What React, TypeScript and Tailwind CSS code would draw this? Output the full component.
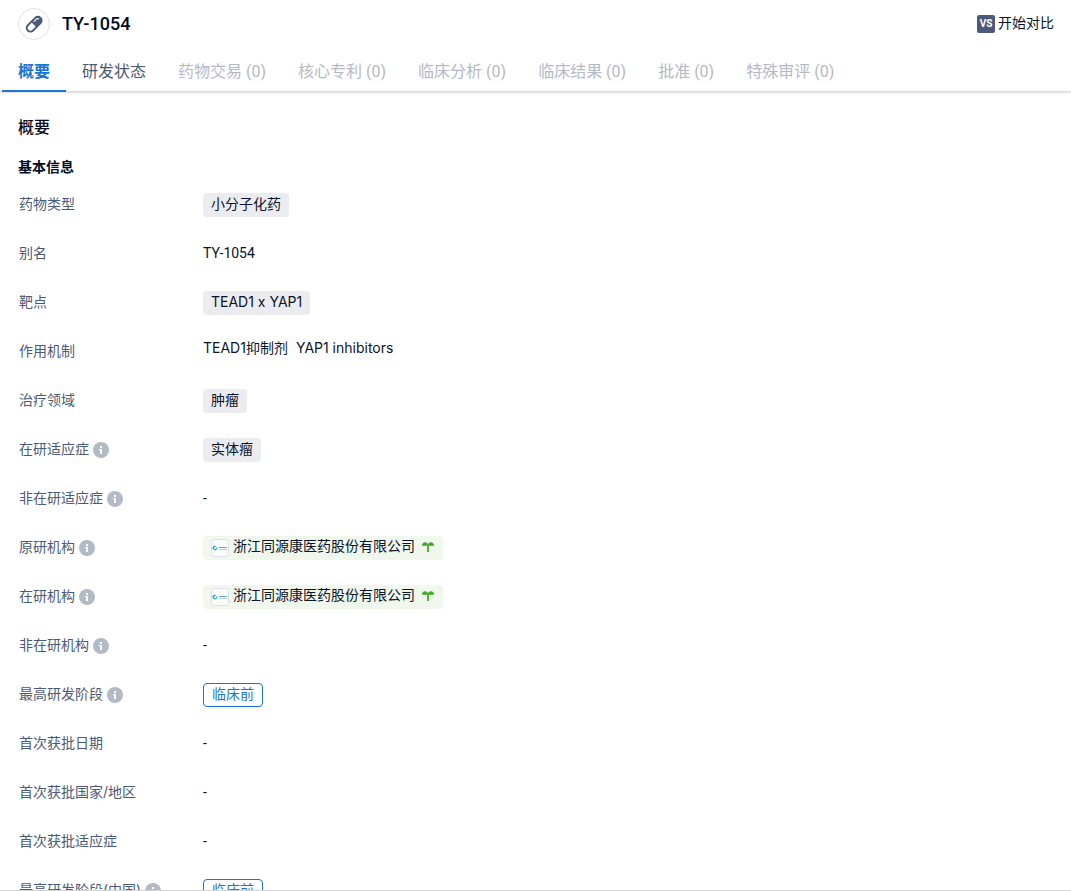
import React, { useState } from 'react';

const tabs = [
  { name: '概要' },
  { name: '研发状态' },
  { name: '药物交易', count: 0 },
  { name: '核心专利', count: 0 },
  { name: '临床分析', count: 0 },
  { name: '临床结果', count: 0 },
  { name: '批准', count: 0 },
  { name: '特殊审评', count: 0 },
];

const PillIcon = () => (
  <svg width="20" height="20" viewBox="0 0 20 20" aria-hidden="true">
    <g transform="rotate(-45 10 10)">
      <rect x="1" y="6.5" width="18" height="7.5" rx="3.75" fill="none" stroke="#4a5a78" strokeWidth="1.9" />
      <path d="M9.500 6.500H15a3.750 3.750 0 0 1 0 7.500H9.500z" fill="#4a5a78" />
      <path d="M12 8.200h3a2 2 0 0 1 1.800 1.300" fill="none" stroke="#fff" strokeWidth="1.100" strokeLinecap="round" />
    </g>
  </svg>
);

const InfoIcon = () => (
  <svg className="mt-1 shrink-0" width="16" height="16" viewBox="0 0 16 16" aria-hidden="true">
    <circle cx="8" cy="8" r="8" fill="#b4b9c6" />
    <path d="M7 4h2v2H7zM6 7h3v5H7V8.200H6z" fill="#fff" />
  </svg>
);

const SproutIcon = () => (
  <svg className="mb-0.5" width="14" height="12" viewBox="0 0 14 12" aria-hidden="true">
    <path d="M.8 5C.8 2.200 2.600 1 4.300 1.200 5.700 1.300 6.600 2.200 7 3.200 7.400 2.200 8.300 1.300 9.700 1.200 11.400 1 13.200 2.200 13.200 5 11.600 4.300 10.300 5.200 9 4.900 8.500 4.800 8 4.600 7.900 4.600V11H6.100V4.600C6 4.600 5.500 4.800 5 4.900 3.700 5.200 2.400 4.300.8 5z" fill="#42ad2d" />
  </svg>
);

const CompanyLogo = () => (
  <svg width="18" height="18" viewBox="0 0 18 18" aria-hidden="true">
    <rect x=".5" y=".5" width="17" height="17" rx="3" fill="#fafcfb" stroke="#dcdfe8" />
    <path d="M4.500 7.500A1.700 1.700 0 0 0 2.500 10" fill="none" stroke="#2584dc" strokeWidth="1.400" />
    <path d="M2.700 10.200A1.800 1.800 0 0 0 5.700 8.500" fill="none" stroke="#22b7a0" strokeWidth="1.400" />
    <path d="M8 8.500h6" stroke="#5f9fe0" />
    <path d="M14 8.500h2" stroke="#6cc89a" />
    <path d="M8 10.500h8" stroke="#c3c7ce" />
  </svg>
);

const Tag = ({ children }: { children: React.ReactNode }) => (
  <span className="flex h-6 items-center rounded bg-[#ebecf0] px-2 pb-0.5">{children}</span>
);

const Company = ({ name }: { name: string }) => (
  <a href="#company" className="flex h-6 items-center rounded bg-[#f0f8ee] px-2">
    <CompanyLogo />
    <span className="mr-1.5 ml-1 pb-1">{name}</span>
    <SproutIcon />
  </a>
);

const Phase = ({ name }: { name: string }) => (
  <a href="#phase" className="flex h-6 items-center rounded border border-[#1976d2] px-2 pb-0.5 text-[#1976d2]">
    {name}
  </a>
);

const rows: { label: string; info?: boolean; value?: React.ReactNode }[] = [
  { label: '药物类型', value: <Tag>小分子化药</Tag> },
  { label: '别名', value: <span className="font-[Roboto,sans-serif]">TY-1054</span> },
  { label: '靶点', value: <Tag>TEAD1 x YAP1</Tag> },
  {
    label: '作用机制',
    value: (
      <div className="flex gap-2 leading-4">
        <span>TEAD1抑制剂</span>
        <span>YAP1 inhibitors</span>
      </div>
    ),
  },
  { label: '治疗领域', value: <Tag>肿瘤</Tag> },
  { label: '在研适应症', info: true, value: <Tag>实体瘤</Tag> },
  { label: '非在研适应症', info: true },
  { label: '原研机构', info: true, value: <Company name="浙江同源康医药股份有限公司" /> },
  { label: '在研机构', info: true, value: <Company name="浙江同源康医药股份有限公司" /> },
  { label: '非在研机构', info: true },
  { label: '最高研发阶段', info: true, value: <Phase name="临床前" /> },
  { label: '首次获批日期' },
  { label: '首次获批国家/地区' },
  { label: '首次获批适应症' },
  { label: '最高研发阶段(中国)', info: true, value: <Phase name="临床前" /> },
];

const App = () => {
  const [active, setActive] = useState('概要');

  return (
    <div className="flex h-screen flex-col overflow-hidden border-b border-[#d4d4d4] bg-white font-[Roboto,'Noto_Sans_CJK_SC',sans-serif] text-[#0b1328]">
      <header className="shrink-0 border-b border-[#dcdcdc] shadow-sm">
        <div className="flex h-12 items-center justify-between pr-[17px] pl-[18px]">
          <div className="flex items-center gap-3">
            <span className="flex size-8 items-center justify-center rounded-full border border-[#dfe1e8]">
              <PillIcon />
            </span>
            <h1 className="text-lg font-medium text-[#030a1c]">TY-1054</h1>
          </div>
          <button type="button" className="flex items-center gap-[3px] text-sm">
            <span className="flex size-[18px] items-center justify-center rounded-xs bg-[#4a5a78] text-[10px] font-bold text-white">VS</span>
            <span className="pb-0.5">开始对比</span>
          </button>
        </div>

        {/* Tabs */}
        <nav className="-mb-px flex pl-0.5">
          {tabs.map((tab) => (
            <button
              key={tab.name}
              type="button"
              disabled={tab.count === 0}
              onClick={() => setActive(tab.name)}
              className={`h-11 border-b-2 px-4 pt-1.5 text-base whitespace-nowrap ${
                active === tab.name
                  ? 'border-[#1976d2] font-bold text-[#1976d2]'
                  : tab.count === 0
                    ? 'border-transparent text-[#b4b9c6]'
                    : 'border-transparent text-[#4a5a78]'
              }`}
            >
              {tab.name}
              {tab.count !== undefined && ` (${tab.count})`}
            </button>
          ))}
        </nav>
      </header>

      <main className="min-h-0 flex-1 overflow-hidden px-[18px] pt-6">
        <h2 className="text-base leading-6 font-medium text-[#030a1c]">概要</h2>
        <h3 className="mt-[17px] text-sm leading-5 font-bold text-[#030a1c]">基本信息</h3>

        <dl className="mt-4 font-[Inter,'Noto_Sans_CJK_SC',sans-serif] text-sm leading-[22px]">
          {rows.map((row) => (
            <div key={row.label} className="flex min-h-[49px] items-start">
              <dt className="flex w-[185px] shrink-0 gap-1 pl-px text-[#4a5a78]">
                <span>{row.label}</span>
                {row.info && <InfoIcon />}
              </dt>
              <dd className="flex">{row.value ?? <span className="font-[Roboto,sans-serif]">-</span>}</dd>
            </div>
          ))}
        </dl>
      </main>
    </div>
  );
};

export default App;
